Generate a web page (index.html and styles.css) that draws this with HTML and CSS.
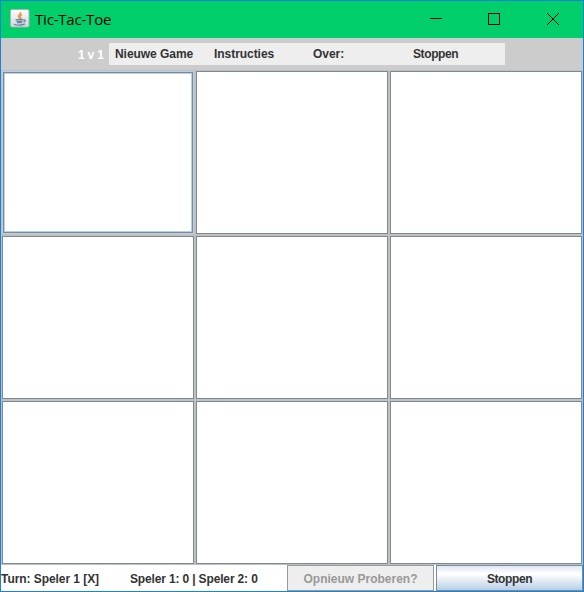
FILE: index.html
```html
<!DOCTYPE html>
<html lang="nl">
<head>
<meta charset="utf-8">
<title>Tic-Tac-Toe</title>
<link rel="stylesheet" href="styles.css">
</head>
<body>
<div class="window">
  <header class="titlebar">
    <svg class="app-icon" width="20" height="20" viewBox="0 0 20 20">
      <defs><linearGradient id="tile" x1="0" y1="0" x2="0" y2="1"><stop offset="0" stop-color="#fff"/><stop offset="1" stop-color="#cfd5d8"/></linearGradient></defs>
      <rect x=".5" y=".5" width="18.5" height="17.5" rx="1.5" fill="url(#tile)" stroke="#a7b6b4"/>
      <path d="M10.500 3c1 2-3 3-2 4.800 .4 1 1.500 1.200 1 2.200M12 5.500c-2 1-2.500 1.700-1.500 2.700s.5 1.300 0 1.800" fill="none" stroke="#e9954f" stroke-width="1.500"/>
      <path d="M5.500 10.700h7.500M6.500 12.300h6M7 13.700h5M4 15.200c3 1 8 1 11-.3M13 11c3-1 3 1.500.3 2" fill="none" stroke="#6585a4" stroke-width="1.200"/>
    </svg>
    <h1 class="title">Tic-Tac-Toe</h1>
    <div class="controls">
      <svg width="12" height="12" viewBox="0 0 12 12" shape-rendering="crispEdges"><path d="M0 5.500h12"/></svg>
      <svg width="12" height="12" viewBox="0 0 12 12" shape-rendering="crispEdges"><path d="M.5.5h11v11H.5z"/></svg>
      <svg class="close" width="12" height="12" viewBox="0 0 12 12"><path d="M0 0l12 12M12 0L0 12"/></svg>
    </div>
  </header>
  <nav class="toolbar">
    <span class="mode">1 v 1</span>
    <div class="menu">
      <span class="item">Nieuwe Game</span>
      <span class="item">Instructies</span>
      <span class="item">Over:</span>
      <span class="item tight">Stoppen</span>
    </div>
  </nav>
  <main class="board">
    <div class="cell focused"></div><div class="cell"></div><div class="cell"></div>
    <div class="cell"></div><div class="cell"></div><div class="cell"></div>
    <div class="cell"></div><div class="cell"></div><div class="cell"></div>
  </main>
  <footer class="status">
    <span class="turn">Turn: Speler 1 [X]</span>
    <span class="score">Speler 1: 0 | Speler 2: 0</span>
    <button class="button" disabled>Opnieuw Proberen?</button>
    <button class="button quit tight">Stoppen</button>
  </footer>
</div>
</body>
</html>
```
FILE: styles.css
```css
* { box-sizing: border-box; }
body { margin: 0; font: bold 12px "Liberation Sans", Arial, sans-serif; color: #333; }
.window { width: 584px; height: 592px; border: 1px solid #1883d7; display: flex; flex-direction: column; background: #fff; overflow: hidden; }
.titlebar { height: 37px; flex: none; background: #00cf6b; display: flex; align-items: center; padding-left: 9px; }
.app-icon { margin-top: -1px; }
.title { margin: 0 0 2px 5px; font: 15px "Open Sans", sans-serif; letter-spacing: -0.2px; color: #000; }
.controls { margin-left: auto; display: flex; gap: 46px; padding: 0 24px 1px 0; }
.controls svg { fill: none; stroke: #000; stroke-width: 1; display: block; }
.controls .close { margin-left: 1px; }
.toolbar { height: 32px; flex: none; background: #ccc; display: flex; align-items: center; padding-left: 77px; }
.mode { width: 31px; color: #fff; padding-top: 1px; letter-spacing: -0.2px; }
.menu { width: 396px; height: 22px; background: #eee; display: grid; grid-template-columns: 99px 99px 100px 98px; align-items: center; padding-left: 6px; white-space: nowrap; letter-spacing: -0.05px; }
.tight { letter-spacing: -0.4px; }
.board { height: 495px; flex: none; background: #c0c0c0; padding: 1px; display: grid; grid-template-columns: repeat(3, 192px); grid-template-rows: repeat(3, 163px); gap: 2px; }
.cell { background: #fff; border: 1px solid #7a8a99; }
.focused { border-color: #b8cfe5; box-shadow: inset 0 0 0 1px #7a8a99, inset 0 0 0 2px #b8cfe5; }
.status { height: 26px; flex: none; display: flex; align-items: stretch; line-height: 28px; white-space: nowrap; }
.turn { width: 129px; letter-spacing: -0.06px; }
.score { width: 157px; letter-spacing: -0.15px; }
.button { width: 147px; margin: 0; padding: 0; font: inherit; line-height: 26px; text-align: center; border: 1px solid #999; background: #eee; color: #999; }
.quit { margin-left: 2px; border-color: #7a8a99; background: linear-gradient(#dde8f3, #fff 32%, #fff 35%, #b8cfe5); color: #333; letter-spacing: -0.4px; }
```
